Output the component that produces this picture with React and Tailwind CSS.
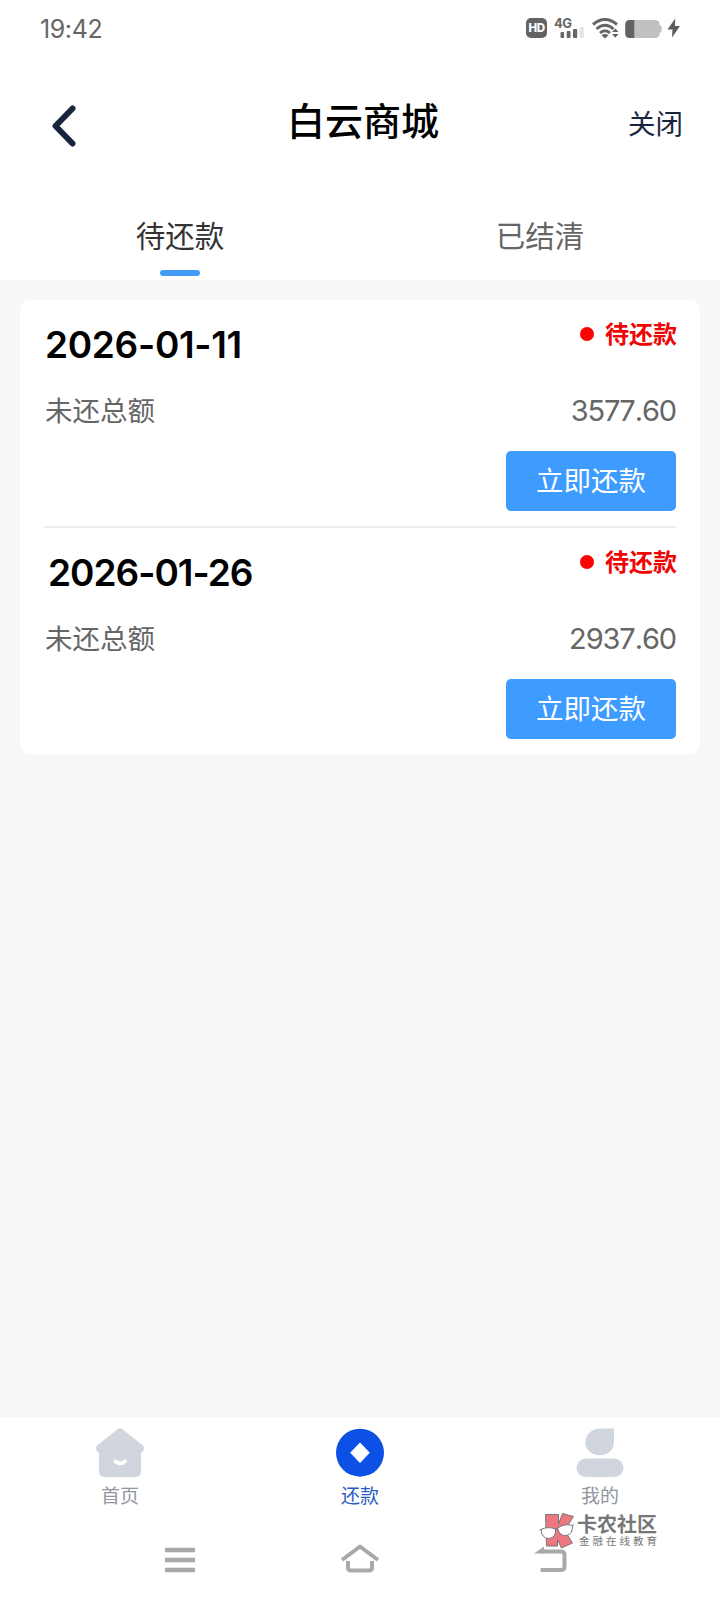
import React, { useState } from "react";

const bills = [
  { date: "2026-01-11", amount: "3577.60", dateClass: "pl-px tracking-[-0.3px]" },
  { date: "2026-01-26", amount: "2937.60", dateClass: "pl-[4px] tracking-[-1px]" },
];

const StatusBar = () => (
  <div className="flex h-14 items-center justify-between pr-[39px] pl-10 text-[#666]">
    <span className="pt-[2px] font-[Inter] text-[25px] leading-none tracking-[-0.4px]">19:42</span>
    <div className="flex items-center">
      <div className="flex h-5 w-[21px] items-center justify-center rounded-[5px] bg-[#636363] pt-px font-[Inter] text-[11.5px] leading-none font-extrabold tracking-[-0.5px] text-white">
        HD
      </div>
      <svg width="31" height="22" viewBox="0 0 31 22" className="ml-[7px] overflow-visible">
        <text x="0" y="11" fontSize="13" fontWeight="700" fill="#666" fontFamily="Inter" letterSpacing="-0.5">4G</text>
        <rect x="6.500" y="15" width="3.600" height="6" rx="1" fill="#666" />
        <rect x="12.700" y="14" width="3.800" height="7" rx="1" fill="#666" />
        <rect x="19" y="12" width="4.200" height="9" rx="1" fill="#666" />
        <rect x="25.700" y="10" width="4" height="11" rx="1" fill="#e3e3e3" />
      </svg>
      <svg width="28" height="21" viewBox="0 0 28 21" className="ml-[7px]" fill="none" stroke="#666">
        <path d="M1 6.500Q13 -3.500 25 6.500" strokeWidth="3" />
        <path d="M4.500 11Q13 3.500 21.500 11" strokeWidth="3" />
        <path d="M8 15Q13 10.500 18 15" strokeWidth="3" />
        <path d="M9.500 17.200Q13 14.800 16.500 17.200L13 20.500Z" fill="#666" stroke="none" />
        <path d="M20 14L23.300 10.500L26.600 14ZM20 16L23.300 19.800L26.600 16Z" fill="#666" stroke="none" />
      </svg>
      <svg width="37" height="20" viewBox="0 0 37 20" className="mt-px ml-[5px]">
        <path d="M34 6.500h1q1.600 0 1.600 1.600v3.800q0 1.600-1.600 1.600h-1z" fill="#c0c0c0" />
        <rect x="0.300" y="1" width="34.400" height="18" rx="4.500" fill="#c0c0c0" />
        <path d="M9.300 1H4.800Q0.300 1 0.300 5.500v9Q0.300 19 4.800 19h4.500z" fill="#636363" />
      </svg>
      <svg width="14" height="20" viewBox="0 0 14 20" className="ml-[5px]">
        <path d="M8.200 0.500L0.500 11.500H5.500L5 19.500L13 8H8Z" fill="#5c5c5c" />
      </svg>
    </div>
  </div>
);

const Header = () => (
  <header className="grid h-[136px] grid-cols-3 items-center px-[37px]">
    <button className="justify-self-start pt-1 pl-[13px]">
      <svg width="26" height="44" viewBox="0 0 26 44" fill="none">
        <path d="M22.500 4.500L5.500 22L22.500 39.500" stroke="#18253f" strokeWidth="6" strokeLinecap="round" strokeLinejoin="round" />
      </svg>
    </button>
    <h1 className="justify-self-center pb-[10px] pl-[6px] text-[38px] leading-none font-medium whitespace-nowrap text-black">白云商城</h1>
    <button className="justify-self-end pb-[3px] text-[27.5px] leading-none text-[#18253f]">关闭</button>
  </header>
);

const BillItem = ({ bill, last }) => (
  <div className={`flex flex-col ${last ? "h-[226px]" : "h-[228px] border-b-2 border-[#ededed]"}`}>
    <div className="flex h-[84px] items-start justify-between">
      <span className={`pt-[26px] font-[Inter] text-[37px] leading-[37px] font-semibold text-black ${bill.dateClass}`}>
        {bill.date}
      </span>
      <div className="flex items-center text-[24px] leading-6 font-bold text-[#f00505]">
        <span className="mt-[23px] mr-[11px] h-[14px] w-[14px] rounded-full bg-[#ff0000]" />
        <span className="-mr-px pt-[21px]">待还款</span>
      </div>
    </div>
    <div className="flex h-[52px] items-center justify-between text-[#666]">
      <span className="pl-px text-[27.5px] leading-none">未还总额</span>
      <span className="pt-px font-[Inter] text-[29px] leading-none tracking-[-1.1px] [font-kerning:none]">{bill.amount}</span>
    </div>
    <button className="mt-[14.500px] h-[60px] w-[170px] self-end rounded-[5px] bg-[#3e9bff] pb-[2px] text-[27.5px] leading-none text-white">
      立即还款
    </button>
  </div>
);

const HomeIcon = () => (
  <svg width="48" height="50" viewBox="0 0 48 50">
    <path d="M21.500 1.200Q24 -0.600 26.500 1.200L47 17.500Q48.500 19 47.500 22Q47 24 45 24.500V43.500Q45 49 39.500 49H8.500Q3 49 3 43.500V24.500Q1 24 0.500 22Q-0.500 19 1 17.500Z" fill="#d1d6de" />
    <path d="M19.500 33.500Q24 37.200 29 33.500" fill="none" stroke="#fff" strokeWidth="3.800" strokeLinecap="round" />
  </svg>
);

const RepayIcon = () => (
  <svg width="48" height="50" viewBox="0 0 48 50">
    <circle cx="24" cy="24.700" r="24" fill="#0d50e5" />
    <path d="M24 15L33.300 24.800L24 34.500L14.700 24.800Z" fill="#fff" stroke="#fff" strokeLinejoin="round" />
  </svg>
);

const MineIcon = () => (
  <svg width="48" height="50" viewBox="0 0 48 50">
    <path d="M24.500 0.500H38V14.500C38 22.500 31.500 27.300 23.800 27.300C15.500 27.300 9.300 21.500 9.300 14.500C9.300 6.500 16 0.500 24.500 0.500Z" fill="#d1d6de" />
    <rect x="0.500" y="30.500" width="47" height="18.500" rx="9.250" fill="#d1d6de" />
  </svg>
);

const navItems = [
  { label: "首页", Icon: HomeIcon },
  { label: "还款", Icon: RepayIcon, active: true },
  { label: "我的", Icon: MineIcon },
];

const SystemNav = () => (
  <div className="flex h-[80px] items-center pl-[164px] text-[#a9a9a9]">
    <svg width="32" height="32" viewBox="0 0 32 32" stroke="currentColor" strokeWidth="4.500">
      <path d="M1 6H31M1 16H31M1 26H31" />
    </svg>
    <svg width="40" height="34" viewBox="0 0 40 34" className="ml-[144px]" fill="none" stroke="currentColor" strokeWidth="4">
      <path d="M2 17L20 3.500L38 17" strokeLinejoin="round" />
      <path d="M8 18V24.500Q8 27.500 11 27.500H29Q32 27.500 32 24.500V18" />
    </svg>
    <svg width="36" height="36" viewBox="0 0 36 36" className="ml-[153px]" fill="none" stroke="currentColor" strokeWidth="4">
      <path d="M9 9.500H28Q31.500 9.500 31.500 13V24.500Q31.500 28 28 28H7.500" />
      <path d="M1 11.500L11 4.500V11.500Z" fill="currentColor" stroke="none" />
    </svg>
  </div>
);

const Watermark = () => (
  <div className="absolute top-[1512px] left-[539px] flex">
    <svg width="36" height="37" viewBox="0 0 36 37" stroke="#777" strokeWidth="1">
      <path d="M6.500 2.500H19.500V12L23.500 1.500L34.500 4.500L25.500 18.500L33.500 31L22.500 36L18.500 27.500V34H7.500Z" fill="#ec7780" />
      <path d="M2 17.500Q9 14 16.500 17Q17.500 26 9.500 26.500Q2.500 26 2 17.500ZM18.500 16Q26 11 33.500 13.500Q34 22 27.500 23.500Q20.500 24.500 18.500 16Z" fill="#fff" />
      <path d="M0.500 18L2 17.500M16.500 17L18.500 16M33.500 13.500L35 12.500" fill="none" />
    </svg>
    <div className="flex flex-col pt-[1px] pl-[2px] text-[#777]">
      <span className="text-[20px] leading-[21px] font-bold whitespace-nowrap">卡农社区</span>
      <span className="pt-px pl-[2px] text-[10.500px] leading-3 tracking-[3px] whitespace-nowrap">金融在线教育</span>
    </div>
  </div>
);

const App = () => {
  const [tab, setTab] = useState("待还款");

  return (
    <div className="relative flex h-[1600px] w-[720px] flex-col overflow-hidden bg-white font-['Noto_Sans_CJK_SC',sans-serif]">
      <StatusBar />
      <Header />

      <div className="grid h-[88px] grid-cols-2">
        {["待还款", "已结清"].map((name) => (
          <button
            key={name}
            onClick={() => setTab(name)}
            className={`flex flex-col items-center pt-[27px] text-[29.5px] leading-[30px] ${tab === name ? "text-[#333]" : "text-[#666]"}`}
          >
            {name}
            {tab === name && <span className="mt-[21px] h-[6px] w-10 rounded-full bg-[#419bf7]" />}
          </button>
        ))}
      </div>

      <main className="flex-1 bg-[#f7f7f7] p-5">
        <div className="rounded-[10px] bg-white px-6">
          {bills.map((bill, i) => (
            <BillItem key={bill.date} bill={bill} last={i === bills.length - 1} />
          ))}
        </div>
      </main>

      <nav className="grid h-[103px] grid-cols-3 pt-[11px]">
        {navItems.map(({ label, Icon, active }) => (
          <button key={label} className="flex flex-col items-center">
            <Icon />
            <span className={`mt-[7px] text-[19px] leading-5 ${active ? "text-[#2b5cc4]" : "text-[#92979f]"}`}>{label}</span>
          </button>
        ))}
      </nav>
      <SystemNav />
      <Watermark />
    </div>
  );
};

export default App;
